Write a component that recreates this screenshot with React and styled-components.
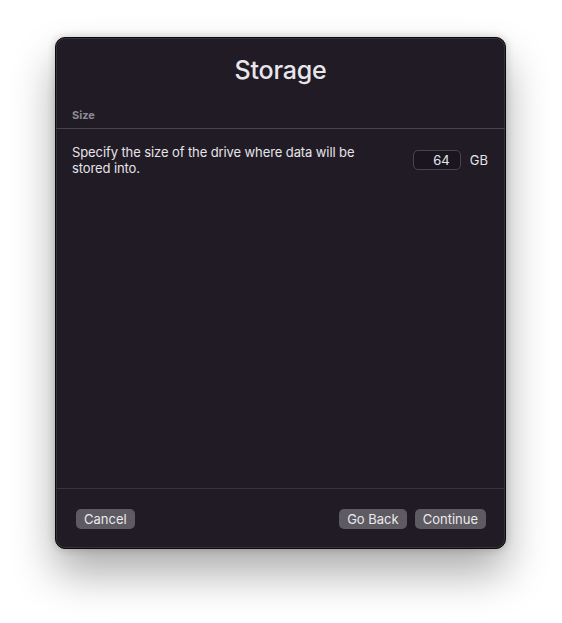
import React from 'react'
import styled, { createGlobalStyle } from 'styled-components'

const GlobalStyle = createGlobalStyle`
    html, body {
        margin: 0;
        padding: 0;
        background: #ffffff;
    }
    body {
        font-family: Inter, "Noto Sans", sans-serif;
        -webkit-font-smoothing: antialiased;
    }
`;

function App() {
    return (
        <Stage>
            <GlobalStyle />
            <Window>
                <Title>Storage</Title>
                <SectionLabel>Size</SectionLabel>
                <Row>
                    <Description>
                        Specify the size of the drive where data will be stored into.
                    </Description>
                    <SizeField>
                        <SizeInput defaultValue="64" />
                        <Unit>GB</Unit>
                    </SizeField>
                </Row>
                <Spacer />
                <Footer>
                    <Button>Cancel</Button>
                    <FooterRight>
                        <Button>Go Back</Button>
                        <Button>Continue</Button>
                    </FooterRight>
                </Footer>
            </Window>
        </Stage>
    )
}

export default App

const Stage = styled.div`
    min-height: 623px;
    padding: 37px 0 0 55px;
    box-sizing: border-box;
`;

const Window = styled.div`
    width: 451px;
    height: 512px;
    box-sizing: border-box;
    display: flex;
    flex-direction: column;
    background-color: #201b25;
    border: 1px solid #0b090d;
    border-radius: 10px;
    box-shadow:
        inset 0 0 0 1px rgba(255, 255, 255, 0.1),
        0 24px 44px rgba(0, 0, 0, 0.33),
        0 0 8px rgba(0, 0, 0, 0.2);
`;

const Title = styled.h1`
    margin: 0;
    padding: 17px 0 0;
    height: 47px;
    text-align: center;
    font-size: 25px;
    font-weight: 500;
    letter-spacing: -0.2px;
    color: #e8e6ea;
`;

const SectionLabel = styled.div`
    padding: 6px 16px 6px;
    font-size: 11px;
    font-weight: 700;
    color: #8f8b94;
    border-bottom: 1px solid #47424c;
`;

const Row = styled.div`
    display: flex;
    align-items: center;
    justify-content: space-between;
    padding: 15px 17px 0 16px;
`;

const Description = styled.p`
    margin: 0;
    width: 290px;
    font-size: 13px;
    line-height: 16px;
    letter-spacing: -0.1px;
    color: #e6e4e8;
`;

const SizeField = styled.div`
    display: flex;
    align-items: center;
    gap: 9px;
`;

const SizeInput = styled.input`
    width: 48px;
    height: 20px;
    box-sizing: border-box;
    padding: 0 10px 0 4px;
    text-align: right;
    font-family: inherit;
    font-size: 13px;
    color: #e8e6ea;
    background-color: #1a1620;
    border: 1px solid #48444e;
    border-radius: 5px;
    outline: none;
`;

const Unit = styled.span`
    font-size: 13px;
    color: #e6e4e8;
`;

const Spacer = styled.div`
    flex: 1;
`;

const Footer = styled.div`
    display: flex;
    align-items: flex-start;
    justify-content: space-between;
    height: 60px;
    box-sizing: border-box;
    padding: 20px 19px 0 20px;
    border-top: 1px solid #38333d;
`;

const FooterRight = styled.div`
    display: flex;
    gap: 8px;
`;

const Button = styled.button`
    height: 20px;
    padding: 0 8px;
    font-family: inherit;
    font-size: 13px;
    color: #ebe9ed;
    background-color: #5d5a62;
    border: none;
    border-radius: 5px;
    cursor: pointer;
`;
